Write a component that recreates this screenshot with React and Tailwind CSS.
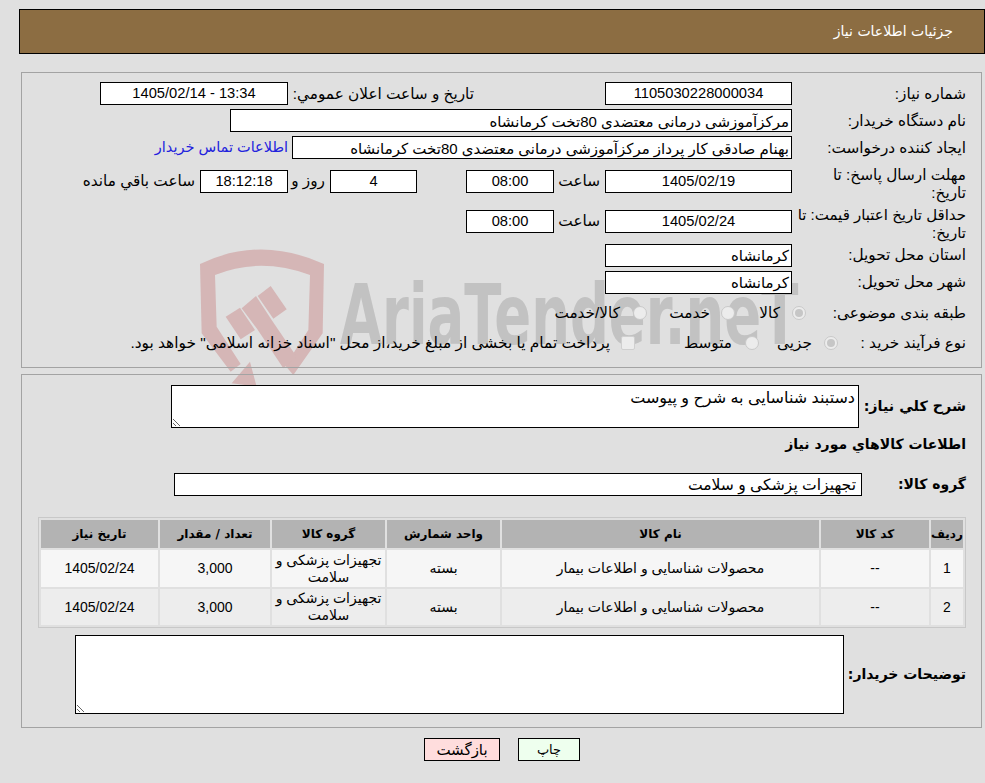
import React from 'react';

function Box({ className = '', children }) {
  return (
    <div className={`h-[23px] shrink-0 border border-black bg-white flex items-center px-[2px] leading-none whitespace-nowrap text-[15px] ${className}`}>
      {children}
    </div>
  );
}

function NumBox({ className = '', children }) {
  return <Box className={`justify-center !text-[14.7px] ${className}`}>{children}</Box>;
}

function Radio({ on, className = '' }) {
  return (
    <span className={`w-[14px] h-[14px] shrink-0 rounded-full border border-[#c9c9c9] bg-[#ececec] flex items-center justify-center ${className}`}>
      {on && <span className="w-[8px] h-[8px] rounded-full bg-[#c6c6c6]" />}
    </span>
  );
}

function Watermark() {
  return (
    <svg className="absolute left-[190px] top-[240px] w-[620px] h-[160px] [direction:ltr]" viewBox="570 0 1860 480">
      <g fill="#d5b6b6">
        <path d="M600 72 Q780 -15 972 72 L968 280 L880 405 L843 362 L880 340 L925 270 L930 105 Q780 50 645 105 L650 260 L722 372 L692 395 L605 280 Z" />
        <path d="M750 365 L770 440 L695 430 Z" />
        <path d="M677 230 L720 203 L765 270 L722 298 Z" />
        <path d="M725 205 L768 168 L815 240 L890 350 L850 385 L770 265 Z" />
        <path d="M773 168 L812 138 L860 208 L820 236 Z" />
      </g>
      <text x="1020" y="312" fill="#c2c2c2" fontFamily="'DejaVu Sans', sans-serif" fontWeight="700" fontSize="250" textLength="1375" lengthAdjust="spacingAndGlyphs">AriaTender.neT</text>
    </svg>
  );
}

const rows = [
  { id: 1, bg: 'bg-[#f6f6f6]', h: 'h-[37px]' },
  { id: 2, bg: 'bg-[#ededed]', h: 'h-[36px]' },
];

export default function App() {
  return (
    <div dir="rtl" className="relative min-h-screen overflow-hidden bg-[#e0e0e0] pt-[9px] text-[15.3px] text-black font-['Liberation_Sans','DejaVu_Sans',sans-serif]">
      <Watermark />
      <div className="relative">
        <div className="mr-0 w-[966px] h-[45px] border border-black bg-[#8c6d42] flex items-center pr-[31px] text-[14px] text-white font-['DejaVu_Sans',sans-serif]">
          جزئیات اطلاعات نیاز
        </div>

        {/* top panel */}
        <div className="mr-[3px] w-[961px] h-[296px] mt-[18px] border border-[#a3a3a3] pt-[9px] pr-[15px]">
          <div className="flex items-center h-[23px]">
            <div className="w-[174px] pt-[2px]">شماره نیاز:</div>
            <NumBox className="w-[187px]">1105030228000034</NumBox>
            <div className="w-[186px] mr-[131px] pt-[2px] whitespace-nowrap">تاریخ و ساعت اعلان عمومي:</div>
            <NumBox className="w-[188px]"><span dir="ltr">1405/02/14 - 13:34</span></NumBox>
          </div>
          <div className="flex items-center h-[23px] mt-[4px]">
            <div className="w-[174px] pt-[1px]">نام دستگاه خریدار:</div>
            <Box className="w-[562px] pt-[1px]">مرکزآموزشی درمانی معتضدی 80تخت کرمانشاه</Box>
          </div>
          <div className="flex items-center h-[23px] mt-[4px]">
            <div className="w-[174px] pt-[1px]">ایجاد کننده درخواست:</div>
            <Box className="w-[500px] pt-[1px]">بهنام صادقی کار پرداز مرکزآموزشی درمانی معتضدی 80تخت کرمانشاه</Box>
            <a className="mr-[4px] text-[#2222dd] text-[14.5px] whitespace-nowrap">اطلاعات تماس خریدار</a>
          </div>
          <div className="flex items-start mt-[11px] h-[40px]">
            <div className="w-[174px] leading-[18px] pl-[6px] -mt-[4px]">مهلت ارسال پاسخ: تا تاریخ:</div>
            <NumBox className="w-[187px]">1405/02/19</NumBox>
            <div className="w-[46px] mr-[5px]">ساعت</div>
            <NumBox className="w-[88px]">08:00</NumBox>
            <NumBox className="w-[87px] mr-[49px]">4</NumBox>
            <div className="w-[37px] mr-[5px]">روز و</div>
            <NumBox className="w-[88px] bg-[#ffffee]">18:12:18</NumBox>
            <div className="mr-[5px] whitespace-nowrap">ساعت باقي مانده</div>
          </div>
          <div className="flex items-start h-[34px]">
            <div className="w-[174px] leading-[18px] -mt-[4px] text-[15px]">حداقل تاریخ اعتبار قیمت: تا تاریخ:</div>
            <NumBox className="w-[187px]">1405/02/24</NumBox>
            <div className="w-[46px] mr-[5px]">ساعت</div>
            <NumBox className="w-[88px]">08:00</NumBox>
          </div>
          <div className="flex items-center h-[23px]">
            <div className="w-[174px]">استان محل تحویل:</div>
            <Box className="w-[187px]">کرمانشاه</Box>
          </div>
          <div className="flex items-center h-[23px] mt-[4px]">
            <div className="w-[174px]">شهر محل تحویل:</div>
            <Box className="w-[187px]">کرمانشاه</Box>
          </div>
          <div className="flex items-center mt-[8px] h-[22px] whitespace-nowrap">
            <div className="w-[160px]">طبقه بندی موضوعی:</div>
            <Radio on />
            <span className="w-[45px] mr-[12px]">کالا</span>
            <Radio />
            <span className="w-[63px] mr-[11px]">خدمت</span>
            <Radio />
            <span className="mr-[13px]">کالا/خدمت</span>
          </div>
          <div className="flex items-center mt-[8px] h-[22px] whitespace-nowrap">
            <div className="w-[128px]">نوع فرآیند خرید :</div>
            <Radio on />
            <span className="w-[53px] mr-[12px]">جزیی</span>
            <Radio />
            <span className="w-[97px] mr-[13px]">متوسط</span>
            <span className="w-[14px] h-[14px] shrink-0 rounded-[2px] border border-[#cfcfcf] bg-[#ececec]" />
            <span className="mr-[11px] text-[15.4px]">پرداخت تمام یا بخشی از مبلغ خرید،از محل "اسناد خزانه اسلامی" خواهد بود.</span>
          </div>
        </div>

        {/* bottom panel */}
        <div className="mr-[3px] w-[961px] h-[354px] mt-[6px] border border-[#a3a3a3] pt-[10px] pr-[15px]">
          <div className="flex items-center h-[43px]">
            <div className="w-[107px] font-bold text-[14.3px] font-['DejaVu_Sans',sans-serif]">شرح کلي نیاز:</div>
            <textarea
              readOnly
              dir="rtl"
              defaultValue="دستبند شناسایی به شرح و پیوست"
              className="w-[688px] h-[43px] border border-black bg-white px-[3px] py-[2px] text-[16px] leading-[20px] outline-none"
            />
          </div>
          <div className="font-bold text-[14px] mt-[6px] h-[20px] leading-[20px] font-['DejaVu_Sans',sans-serif]">اطلاعات کالاهاي مورد نیاز</div>
          <div className="flex items-center mt-[19px]">
            <div className="w-[104px] font-bold text-[14px] font-['DejaVu_Sans',sans-serif]">گروه کالا:</div>
            <Box className="w-[688px] pr-[5px] !text-[15.6px]">تجهیزات پزشکی و سلامت</Box>
          </div>
          <table className="table-fixed w-[928px] mt-[21px] border border-[#c8c8c8] border-separate border-spacing-[2px] text-center text-[14px]">
            <colgroup>
              <col className="w-[32px]" />
              <col className="w-[108px]" />
              <col className="w-[317px]" />
              <col className="w-[113px]" />
              <col className="w-[113px]" />
              <col className="w-[110px]" />
              <col className="w-[117px]" />
            </colgroup>
            <thead>
              <tr className="h-[28px] bg-[#b3b3b3] text-[12px] font-bold font-['DejaVu_Sans',sans-serif]">
                <th className="p-0">ردیف</th>
                <th className="p-0">کد کالا</th>
                <th className="p-0">نام کالا</th>
                <th className="p-0">واحد شمارش</th>
                <th className="p-0">گروه کالا</th>
                <th className="p-0">تعداد / مقدار</th>
                <th className="p-0">تاریخ نیاز</th>
              </tr>
            </thead>
            <tbody>
              {rows.map((r) => (
                <tr key={r.id} className={`${r.h} ${r.bg}`}>
                  <td className="p-0">{r.id}</td>
                  <td className="p-0">--</td>
                  <td className="p-0">محصولات شناسایی و اطلاعات بیمار</td>
                  <td className="p-0">بسته</td>
                  <td className="p-0 leading-[17px]">تجهیزات پزشکی و سلامت</td>
                  <td className="p-0">3,000</td>
                  <td className="p-0">1405/02/24</td>
                </tr>
              ))}
            </tbody>
          </table>
          <div className="flex items-center mt-[7px]">
            <div className="w-[122px] font-bold text-[14px] font-['DejaVu_Sans',sans-serif]">توضیحات خریدار:</div>
            <textarea readOnly dir="rtl" className="w-[769px] h-[79px] border border-black bg-white outline-none" />
          </div>
        </div>

        <div className="flex mt-[10px] mr-[405px]">
          <button className="w-[62px] h-[23px] border border-black bg-[#eeffee] leading-none text-[13px]">چاپ</button>
          <button className="w-[76px] h-[23px] mr-[18px] border border-black bg-[#ffdddd] leading-none text-[15px]">بازگشت</button>
        </div>
      </div>
    </div>
  );
}
